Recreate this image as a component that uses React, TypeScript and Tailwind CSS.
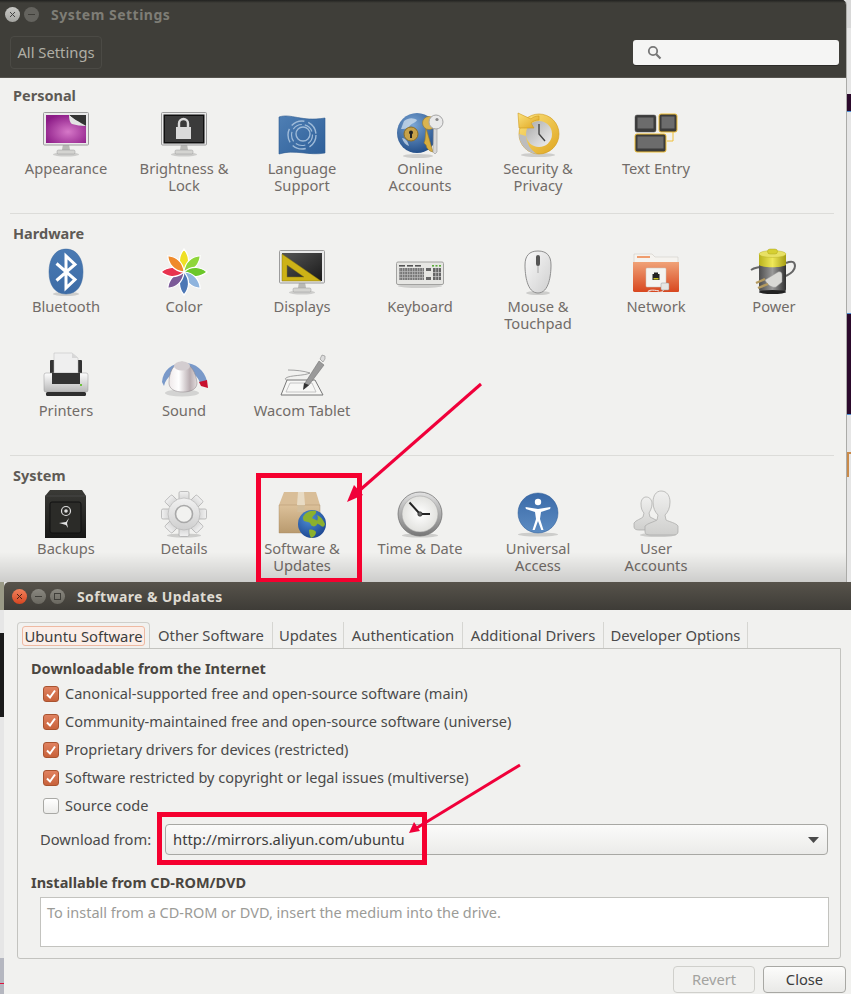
import type { ReactNode } from 'react';

function Icon({ children }: { children: ReactNode }) {
  return (
    <svg width="48" height="48" viewBox="0 0 48 48" className="shrink-0">
      {children}
    </svg>
  );
}

function Shadow({ cx = 24, cy = 45, rx = 16 }: { cx?: number; cy?: number; rx?: number }) {
  return <ellipse cx={cx} cy={cy} rx={rx} ry={2} fill="#000" opacity="0.15" />;
}

function Monitor({ children }: { children: ReactNode }) {
  return (
    <>
      <Shadow cy={44.5} rx={13} />
      <path d="M21 34h6l1 6h-8z" fill="#b9b9b6" />
      <rect x="15" y="40" width="18" height="4" rx="1.5" fill="#d4d4d1" stroke="#999" strokeWidth="0.5" />
      <rect x="1.5" y="2.5" width="45" height="32.5" rx="1" fill="#eaeaea" stroke="#9c9c9c" />
      {children}
    </>
  );
}

function Appearance() {
  return (
    <Icon>
      <defs>
        <radialGradient id="ap1" cx="0.55" cy="0.6" r="0.65">
          <stop offset="0" stopColor="#d678c8" />
          <stop offset="1" stopColor="#8c1b87" />
        </radialGradient>
      </defs>
      <Monitor>
        <rect x="4" y="5" width="40" height="28" fill="#333" />
        <path d="M4 5h23l2 7 8 3 7 1v17H4z" fill="url(#ap1)" />
        <path d="M27 5c1 5 8 10 17 11-4-1-8-2-11-6z" fill="#fff" />
        <path d="M27 5c0 4 1 8 3 9 4 1 9 2 14 2-6-4-13-7-17-11z" fill="#e3e3e3" />
      </Monitor>
    </Icon>
  );
}

function Brightness() {
  return (
    <Icon>
      <Monitor>
        <rect x="3.5" y="4.5" width="41" height="29" fill="#0f0f0f" />
        <rect x="5" y="6" width="38" height="26" fill="#3b3b3b" />
        <rect x="16" y="17" width="15" height="12" fill="#dadada" />
        <path d="M19 17v-3.5a4.5 4.5 0 0 1 9 0V17" fill="none" stroke="#dadada" strokeWidth="2.4" />
      </Monitor>
    </Icon>
  );
}

function Language() {
  return (
    <Icon>
      <defs>
        <linearGradient id="la1" x1="0" y1="0" x2="1" y2="1">
          <stop offset="0" stopColor="#4f7fb4" />
          <stop offset="1" stopColor="#2e5f99" />
        </linearGradient>
      </defs>
      <path d="M1 7c12-4 22 5 46 1v35c-16 3-30-4-46 1z" fill="url(#la1)" stroke="#2d5a90" strokeWidth="0.6" />
      <g fill="none" stroke="#a9c3de" opacity="0.9">
        <circle cx="24" cy="25" r="14" strokeWidth="1.4" strokeDasharray="14 4" />
        <circle cx="24" cy="25" r="10.5" strokeWidth="1.2" strokeDasharray="10 3" />
        <circle cx="25" cy="24" r="7" strokeWidth="1.4" />
      </g>
    </Icon>
  );
}

function Online() {
  return (
    <Icon>
      <defs>
        <radialGradient id="on1" cx="0.4" cy="0.3" r="0.8">
          <stop offset="0" stopColor="#7aa6d6" />
          <stop offset="1" stopColor="#19447f" />
        </radialGradient>
      </defs>
      <Shadow cx={22} cy={46} rx={15} />
      <circle cx="21" cy="23" r="20" fill="url(#on1)" />
      <path d="M8 11c5-4 10-3 13-1-1 3-6 3-8 7-2 2-6 2-8 2zM6 28c3 0 6 3 7 8-3-1-6-4-7-8z" fill="#d7e4ef" opacity="0.7" />
      <circle cx="15" cy="24" r="7" fill="#c7a24a" stroke="#8c6d24" />
      <circle cx="15" cy="22.5" r="2" fill="#222" />
      <rect x="14" y="23" width="2" height="5" fill="#222" />
      <path d="M30 18l7 24 -3-1-3-3-1-3-2-2 1-3z" fill="#d6ad3f" stroke="#9e7a22" strokeWidth="0.6" />
      <circle cx="33" cy="13" r="6.5" fill="#d9b451" stroke="#9e7a22" strokeWidth="0.6" />
      <path d="M37.5 18h3.5v24l-2 2-2-2z" fill="#d8d8d8" stroke="#999" strokeWidth="0.6" />
      <circle cx="40" cy="12" r="7" fill="#e9e9e9" stroke="#a5a5a5" />
      <circle cx="41" cy="9.5" r="1.6" fill="#888" />
    </Icon>
  );
}

function Security() {
  return (
    <Icon>
      <defs>
        <linearGradient id="se1" x1="0" y1="0" x2="1" y2="1">
          <stop offset="0" stopColor="#fbe27c" />
          <stop offset="1" stopColor="#dfa51f" />
        </linearGradient>
        <linearGradient id="se2" x1="0" y1="0" x2="1" y2="1">
          <stop offset="0" stopColor="#a9a9a9" />
          <stop offset="1" stopColor="#f2f2f2" />
        </linearGradient>
      </defs>
      <Shadow cy={45} rx={17} />
      <circle cx="25" cy="24" r="20" fill="url(#se1)" stroke="#d09a1c" strokeWidth="0.6" />
      <path d="M5 24a20 20 0 0 0 18 20c-6-4-10-9-11-18z" fill="#bdbdbd" />
      <circle cx="25" cy="24" r="13" fill="url(#se2)" />
      <path d="M25 14v10l6 7" fill="none" stroke="#444" strokeWidth="1.4" />
      <path d="M4 3l1 15h15l-3-5c2-2 5-3 8-3V6c-3 0-6 1-8 3z" fill="url(#se1)" stroke="#d09a1c" strokeWidth="0.6" />
    </Icon>
  );
}

function KeyCap({ x, y, w, h, lit }: { x: number; y: number; w: number; h: number; lit?: boolean }) {
  return (
    <>
      <rect x={x} y={y} width={w} height={h} rx="2" fill="#3b3b3b" stroke={lit ? '#f0bf36' : '#555'} strokeWidth={lit ? 1 : 0.5} />
      <rect x={x + 2.5} y={y + 2.5} width={w - 5} height={h - 6} fill="#6c6c6c" />
    </>
  );
}

function TextEntry() {
  return (
    <Icon>
      <path d="M41 22v9h-6" fill="none" stroke="#f0bf36" strokeWidth="1" />
      <KeyCap x={3} y={5} w={21} h={17} />
      <KeyCap x={27} y={4} w={18} h={18} lit />
      <KeyCap x={3} y={24} w={31} h={18} lit />
    </Icon>
  );
}

function Bluetooth() {
  return (
    <Icon>
      <defs>
        <linearGradient id="bt1" x1="0" y1="0" x2="0" y2="1">
          <stop offset="0" stopColor="#4a7ab3" />
          <stop offset="1" stopColor="#3d6ca6" />
        </linearGradient>
      </defs>
      <Shadow cy={46} rx={13} />
      <path d="M24 1c11 0 17 10 17 23s-6 22-17 22S7 37 7 24 13 1 24 1z" fill="url(#bt1)" stroke="#3a689f" strokeWidth="0.5" />
      <path d="M14.5 15.5L33 31.5 24 40V8l9 8.5-18.5 16" fill="none" stroke="#fff" strokeWidth="3" />
    </Icon>
  );
}

function Color() {
  const petals = ['#efe026', '#8fd63a', '#6bc72a', '#8fb4de', '#4c77b5', '#7c5a98', '#e8324e', '#ef8a2a'];
  return (
    <Icon>
      {petals.map((c, i) => (
        <path
          key={c}
          d="M24 24C17 16 19 7 24 1c5 6 7 15 0 23z"
          fill={c}
          stroke="#fff"
          strokeWidth="1.2"
          transform={`rotate(${i * 45} 24 24)`}
        />
      ))}
    </Icon>
  );
}

function Displays() {
  return (
    <Icon>
      <defs>
        <linearGradient id="di1" x1="0" y1="0" x2="1" y2="1">
          <stop offset="0" stopColor="#555" />
          <stop offset="1" stopColor="#1a1a1a" />
        </linearGradient>
      </defs>
      <Monitor>
        <rect x="4" y="5" width="40" height="28" fill="url(#di1)" />
        <path fillRule="evenodd" d="M4 6l39 27H4zM9 17v12h17z" fill="#cdb217" stroke="#8a7a10" strokeWidth="0.5" />
      </Monitor>
    </Icon>
  );
}

function Keyboard() {
  const keys = Array.from({ length: 10 }, (_, i) => i);
  return (
    <Icon>
      <Shadow cy={38} rx={22} />
      <rect x="0.5" y="14" width="47" height="22.5" rx="1.5" fill="#e6e6e3" stroke="#a2a2a0" />
      <rect x="3" y="17" width="6" height="1.6" fill="#555" />
      <rect x="11" y="17" width="6" height="1.6" fill="#555" />
      <rect x="19" y="17" width="6" height="1.6" fill="#555" />
      <rect x="36" y="17" width="2" height="1.6" fill="#5aaa3a" />
      <rect x="39.5" y="17" width="2" height="1.6" fill="#5aaa3a" />
      <rect x="43" y="17" width="2" height="1.6" fill="#5aaa3a" />
      <rect x="3" y="20" width="25" height="12" fill="#777" />
      {keys.map((k) => (
        <rect key={k} x={3.5 + k * 2.5} y="20" width="0.7" height="12" fill="#bbb" />
      ))}
      <rect x="3" y="23" width="25" height="0.7" fill="#bbb" />
      <rect x="3" y="26" width="25" height="0.7" fill="#bbb" />
      <rect x="3" y="29" width="25" height="0.7" fill="#bbb" />
      <rect x="30" y="20" width="5" height="3" fill="#666" />
      <rect x="30" y="29" width="5" height="3" fill="#666" />
      <rect x="37" y="20" width="8" height="12" fill="#666" />
      <rect x="39.5" y="20" width="0.7" height="12" fill="#ccc" />
      <rect x="42" y="20" width="0.7" height="12" fill="#ccc" />
      <rect x="37" y="24" width="8" height="0.7" fill="#ccc" />
      <rect x="37" y="28" width="8" height="0.7" fill="#ccc" />
    </Icon>
  );
}

function Mouse() {
  return (
    <Icon>
      <defs>
        <linearGradient id="mo1" x1="0" y1="0" x2="1" y2="1">
          <stop offset="0" stopColor="#fafafa" />
          <stop offset="1" stopColor="#cfcfcf" />
        </linearGradient>
      </defs>
      <Shadow cy={45} rx={12} />
      <path d="M24 3c9 0 13 5 13 14 0 10-2 28-13 28S11 27 11 17c0-9 4-14 13-14z" fill="url(#mo1)" stroke="#8f8f8f" />
      <rect x="22" y="7" width="4" height="11" rx="2" fill="#555" />
      <rect x="23.6" y="18" width="0.8" height="7" fill="#999" />
    </Icon>
  );
}

function Network() {
  return (
    <Icon>
      <defs>
        <linearGradient id="ne1" x1="0" y1="0" x2="0" y2="1">
          <stop offset="0" stopColor="#f0a277" />
          <stop offset="1" stopColor="#d8471f" />
        </linearGradient>
      </defs>
      <path d="M2 6h18l3 3h23v10H2z" fill="#f5f3ef" stroke="#c9c5bd" strokeWidth="0.5" />
      <rect x="5" y="8" width="13" height="2" fill="#ef9c6d" />
      <path d="M1 14h46v29a1 1 0 0 1-1 1H3a2 2 0 0 1-2-1z" fill="url(#ne1)" />
      <rect x="14" y="20" width="20" height="19" rx="1" fill="#f4f4f1" stroke="#c9c5bd" strokeWidth="0.5" />
      <rect x="20.5" y="26" width="7" height="6" fill="#222" />
      <rect x="22" y="24.5" width="4" height="2" fill="#222" />
      <rect x="21.5" y="30" width="5" height="1.5" fill="#c8c020" />
      <rect x="29" y="35" width="8" height="7" rx="1" fill="#e6e6e3" stroke="#999" strokeWidth="0.5" />
      <path d="M31 42c2 3-12 3-14 2-3-1 2-3 10-1" fill="none" stroke="#eee" strokeWidth="1" />
    </Icon>
  );
}

function Power() {
  return (
    <Icon>
      <defs>
        <linearGradient id="po1" x1="0" y1="0" x2="1" y2="0">
          <stop offset="0" stopColor="#4d4d4d" />
          <stop offset="0.5" stopColor="#9a9a9a" />
          <stop offset="1" stopColor="#2f2f2f" />
        </linearGradient>
        <linearGradient id="po2" x1="0" y1="0" x2="1" y2="0">
          <stop offset="0" stopColor="#b9b21c" />
          <stop offset="0.5" stopColor="#efe85a" />
          <stop offset="1" stopColor="#a59d12" />
        </linearGradient>
      </defs>
      <path d="M10 19c-4 1-6 1-9 3M36 15c5-2 9-2 9 3 0 5-5 8-9 10" fill="none" stroke="#666" strokeWidth="2" />
      <rect x="9" y="14" width="27" height="30" rx="3" fill="url(#po1)" />
      <ellipse cx="22.5" cy="44" rx="13.5" ry="2" fill="#222" />
      <path d="M9 6h27v11c-4 3-23 3-27 0z" fill="url(#po2)" />
      <ellipse cx="22.5" cy="6" rx="13.5" ry="3.5" fill="#e8e164" stroke="#b3ab1c" strokeWidth="0.4" />
      <rect x="17.5" y="1" width="10" height="5" rx="2.5" fill="#d6cf33" stroke="#a59d12" strokeWidth="0.4" />
      <path d="M15 32l13-8c3-1 4 1 4 3v7l-6 5c-3 1-8-1-11-7z" fill="#d9d9d6" stroke="#999" strokeWidth="0.5" />
      <path d="M6 35l9-4M8 40l10-4" stroke="#b49a5f" strokeWidth="2.4" />
    </Icon>
  );
}

function Printer() {
  return (
    <Icon>
      <defs>
        <linearGradient id="pr1" x1="0" y1="0" x2="0" y2="1">
          <stop offset="0" stopColor="#fdfdfd" />
          <stop offset="1" stopColor="#b8b8b8" />
        </linearGradient>
      </defs>
      <rect x="8" y="8" width="32" height="18" rx="1" fill="#333" />
      <path d="M12 1h18l6 5v19H12z" fill="#efefef" stroke="#bbb" strokeWidth="0.5" />
      <path d="M30 1v5h6z" fill="#d7d7d7" />
      <rect x="2" y="21" width="44" height="19" rx="2" fill="url(#pr1)" stroke="#999" strokeWidth="0.5" />
      <rect x="10" y="21" width="28" height="11" fill="#333" />
      <rect x="38" y="32" width="2" height="2" fill="#6fc23e" />
      <rect x="4" y="40" width="40" height="4" rx="1.5" fill="#2e2e2e" />
    </Icon>
  );
}

function Sound() {
  return (
    <Icon>
      <defs>
        <linearGradient id="so1" x1="0" y1="0" x2="1" y2="0">
          <stop offset="0" stopColor="#efe9ea" />
          <stop offset="0.35" stopColor="#ffffff" />
          <stop offset="0.75" stopColor="#b8acb0" />
          <stop offset="1" stopColor="#e2dcdd" />
        </linearGradient>
      </defs>
      <path d="M2 30C3 18 12 11 24 11s20 7 23 18l-7 2c-2-7-8-12-16-12S6 24 4 34z" fill="#6b8fc4" opacity="0.9" />
      <path d="M39 30l8-2 1 8-7-2z" fill="#c8102e" />
      <ellipse cx="22" cy="41" rx="17" ry="3.5" fill="#000" opacity="0.12" />
      <path d="M9 31c0-10 4-20 13-21 9 1 14 11 15 21 0 6-6 9-14 9S9 37 9 31z" fill="url(#so1)" stroke="#8a8286" strokeWidth="0.5" />
      <ellipse cx="22" cy="14" rx="8" ry="4.5" fill="#d3cdd0" />
    </Icon>
  );
}

function Wacom() {
  return (
    <Icon>
      <path d="M10 18c8 0 16 1 22 3-6 3-20 2-24 5-3 2 4 4 20 3" fill="none" stroke="#8d8d8d" strokeWidth="0.8" />
      <path d="M9 28h28l8 15H3z" fill="#f7f7f5" stroke="#777" />
      <path d="M12 31h22l4 9H8z" fill="none" stroke="#b9b9b9" strokeWidth="0.8" />
      <path d="M27 31l14-22 5 4-15 20-5 4z" fill="#9a9a9a" stroke="#666" strokeWidth="0.5" />
      <path d="M42 7l2-4 3 1v3l-2 3z" fill="#dcdcdc" stroke="#777" strokeWidth="0.5" />
      <path d="M26 31l5 2-6 5z" fill="#333" />
    </Icon>
  );
}

function Backups() {
  return (
    <Icon>
      <defs>
        <linearGradient id="ba1" x1="0" y1="0" x2="0" y2="1">
          <stop offset="0" stopColor="#3a3a36" />
          <stop offset="1" stopColor="#171716" />
        </linearGradient>
      </defs>
      <path d="M8 0h32l4 6v42H3V6z" fill="url(#ba1)" />
      <path d="M3 6h41" stroke="#555" strokeWidth="0.6" />
      <rect x="8" y="12" width="31" height="31" rx="2" fill="#2b2b28" stroke="#111" />
      <circle cx="24" cy="21" r="4.5" fill="none" stroke="#ddd" strokeWidth="1.2" />
      <circle cx="24" cy="21" r="1.8" fill="#ddd" />
      <path d="M24 35l-7-2 7-1 3-4-2 5 1 5z" fill="#e6e6e6" />
    </Icon>
  );
}

function Details() {
  const teeth = [0, 45, 90, 135, 180, 225, 270, 315];
  return (
    <Icon>
      <defs>
        <linearGradient id="de1" x1="0" y1="0" x2="0" y2="1">
          <stop offset="0" stopColor="#f1f1f1" />
          <stop offset="1" stopColor="#cfcfcf" />
        </linearGradient>
      </defs>
      <Shadow cy={45.5} rx={17} />
      {teeth.map((t) => (
        <rect key={t} x="19" y="1.5" width="10" height="10" rx="1.5" fill="url(#de1)" stroke="#a8a8a8" strokeWidth="0.7" transform={`rotate(${t} 24 24)`} />
      ))}
      <circle cx="24" cy="24" r="16" fill="url(#de1)" stroke="#b8b8b8" strokeWidth="0.7" />
      <circle cx="24" cy="24" r="8.5" fill="#f2f2f0" stroke="#a8a8a8" strokeWidth="1.6" />
    </Icon>
  );
}

function Globe({ cx, cy, r, id }: { cx: number; cy: number; r: number; id: string }) {
  return (
    <g>
      <defs>
        <radialGradient id={id} cx="0.4" cy="0.3" r="0.8">
          <stop offset="0" stopColor="#4f8fd6" />
          <stop offset="1" stopColor="#173f8a" />
        </radialGradient>
      </defs>
      <circle cx={cx} cy={cy} r={r} fill={`url(#${id})`} />
      <path
        d={`M${cx - 9} ${cy - 7}c3-6 9-7 13-6 1 3-3 4-4 7 2 2 5 1 6 4-1 4-4 6-7 3-1-4-5-3-7-4-1-1-1-3-1-4zM${cx + 5} ${cy - 9}c3 1 6 4 8 9-1 4-3 3-5 1-2-1-4-2-3-4 1-2 1-4 0-6zM${cx - 3} ${cy + 6}c2-1 6 0 7 2 0 3-2 5-5 6-1-2-2-5-2-8z`}
        fill="#8bb02e"
      />
    </g>
  );
}

function Package() {
  return (
    <Icon>
      <defs>
        <linearGradient id="pk1" x1="0" y1="0" x2="0" y2="1">
          <stop offset="0" stopColor="#dcc19a" />
          <stop offset="1" stopColor="#b99a6e" />
        </linearGradient>
      </defs>
      <path d="M6 2h32l4 13H1z" fill="#d9be98" />
      <path d="M1 15h41v28H1z" fill="url(#pk1)" stroke="#a68a60" strokeWidth="0.4" />
      <path d="M20 2h6l1 13h-8z" fill="#e8dbc4" />
      <rect x="19.5" y="15" width="7" height="7" fill="#d2bd9b" />
      <Globe cx={34} cy={34} r={14} id="pk2" />
    </Icon>
  );
}

function Clock() {
  return (
    <Icon>
      <defs>
        <linearGradient id="cl1" x1="0" y1="0" x2="0" y2="1">
          <stop offset="0" stopColor="#e2e2e2" />
          <stop offset="1" stopColor="#777" />
        </linearGradient>
        <radialGradient id="cl2" cx="0.5" cy="0.5" r="0.6">
          <stop offset="0" stopColor="#fff" />
          <stop offset="1" stopColor="#dcdcd8" />
        </radialGradient>
      </defs>
      <Shadow cy={45.5} rx={18} />
      <circle cx="24" cy="24" r="22" fill="url(#cl1)" stroke="#6c6c6c" strokeWidth="0.7" />
      <circle cx="24" cy="24" r="18" fill="url(#cl2)" stroke="#999" strokeWidth="0.5" />
      <path d="M24 24L13.5 12.5M24 24h10" fill="none" stroke="#222" strokeWidth="2" />
      <circle cx="24" cy="24" r="2.2" fill="#666" stroke="#222" strokeWidth="0.7" />
    </Icon>
  );
}

function Universal() {
  return (
    <Icon>
      <defs>
        <linearGradient id="un1" x1="0" y1="0" x2="0" y2="1">
          <stop offset="0" stopColor="#3a6aa8" />
          <stop offset="1" stopColor="#5d8cc2" />
        </linearGradient>
      </defs>
      <Shadow cy={44.5} rx={20} />
      <circle cx="24" cy="23" r="20" fill="url(#un1)" stroke="#2f5d96" strokeWidth="0.5" />
      <circle cx="24" cy="12" r="3.2" fill="#fff" />
      <path d="M11.5 17l12.5 2 12.5-2-.4 2-9.1 3-1 7 3.5 11h-2.2L24 31l-3.3 9h-2.2l3.5-11-1-7-9.1-3z" fill="#fff" />
    </Icon>
  );
}

function Users() {
  return (
    <Icon>
      <defs>
        <linearGradient id="us1" x1="0" y1="0" x2="0" y2="1">
          <stop offset="0" stopColor="#f0f0ef" />
          <stop offset="1" stopColor="#cfcfcd" />
        </linearGradient>
      </defs>
      <Shadow cx={26} cy={45} rx={18} />
      <path d="M14 7c4 0 6 3 6 7 0 4-2 7-3 9l1 4 8 4v9H7c-3 0-5-1-5-3v-4c2-3 7-4 9-6l1-4c-2-2-3-5-3-9 0-4 2-7 5-7z" fill="url(#us1)" stroke="#a8a8a6" strokeWidth="0.7" />
      <path d="M29 1c6 0 9 5 9 11 0 6-2 10-5 13l1 5c4 2 10 3 12 6v6c0 2-2 3-5 3H18c-3 0-5-1-5-3v-6c3-3 9-4 12-6l1-5c-3-3-5-7-5-13 0-6 3-11 8-11z" fill="url(#us1)" stroke="#a8a8a6" strokeWidth="0.7" />
    </Icon>
  );
}

type Item = { icon: ReactNode; label: string[] };

const personal: Item[] = [
  { icon: <Appearance />, label: ['Appearance'] },
  { icon: <Brightness />, label: ['Brightness &', 'Lock'] },
  { icon: <Language />, label: ['Language', 'Support'] },
  { icon: <Online />, label: ['Online', 'Accounts'] },
  { icon: <Security />, label: ['Security &', 'Privacy'] },
  { icon: <TextEntry />, label: ['Text Entry'] },
];

const hardware: Item[] = [
  { icon: <Bluetooth />, label: ['Bluetooth'] },
  { icon: <Color />, label: ['Color'] },
  { icon: <Displays />, label: ['Displays'] },
  { icon: <Keyboard />, label: ['Keyboard'] },
  { icon: <Mouse />, label: ['Mouse &', 'Touchpad'] },
  { icon: <Network />, label: ['Network'] },
  { icon: <Power />, label: ['Power'] },
  { icon: <Printer />, label: ['Printers'] },
  { icon: <Sound />, label: ['Sound'] },
  { icon: <Wacom />, label: ['Wacom Tablet'] },
];

const system: Item[] = [
  { icon: <Backups />, label: ['Backups'] },
  { icon: <Details />, label: ['Details'] },
  { icon: <Package />, label: ['Software &', 'Updates'] },
  { icon: <Clock />, label: ['Time & Date'] },
  { icon: <Universal />, label: ['Universal', 'Access'] },
  { icon: <Users />, label: ['User', 'Accounts'] },
];

function Section({ title, items, className }: { title: string; items: Item[]; className: string }) {
  return (
    <section className={className}>
      <h2 className="pl-[13px] text-[14.5px] leading-[17px] font-bold text-[#5e5a55]">{title}</h2>
      <div className="mt-[6px] grid grid-cols-[repeat(7,118px)] gap-y-[19px] pl-[7px]">
        {items.map((item) => (
          <div key={item.label[0]} className="flex h-[85px] flex-col items-center">
            {item.icon}
            <div className="mt-[2px] text-center text-[14.7px] leading-[17px] whitespace-nowrap text-[#716c68]">
              {item.label.map((line) => (
                <div key={line}>{line}</div>
              ))}
            </div>
          </div>
        ))}
      </div>
    </section>
  );
}

function SettingsWindow() {
  return (
    <div className="absolute top-0 left-0 h-[582px] w-[847px] overflow-hidden rounded-tr-[5px] border-r border-[#ababa8] bg-[#f1f1ef]">
      <header className="h-[78px] border-b border-[#55534e] bg-[#3f3e39]">
        <div className="h-[3px] bg-gradient-to-b from-[#222220] to-[#3f3e39]" />
        <div className="flex h-[22px] items-center pl-[5px]">
          <div className="flex h-[15px] w-[15px] items-center justify-center rounded-full bg-gradient-to-b from-[#c8c8c5] to-[#a5a5a1]">
            <svg width="7" height="7" viewBox="0 0 7 7">
              <path d="M1 1l5 5M6 1l-5 5" stroke="#444" strokeWidth="1" />
            </svg>
          </div>
          <div className="ml-[4px] flex h-[15px] w-[15px] items-center justify-center rounded-full bg-[#64635e]">
            <div className="h-px w-[7px] bg-[#3f3e39]" />
          </div>
          <span className="ml-[12px] text-[14px] font-bold tracking-[0.5px] text-[#7e7d76]">System Settings</span>
        </div>
        <div className="mt-[11px] flex items-center justify-between pr-[7px] pl-[10px]">
          <div className="flex h-[33px] w-[92px] items-center justify-center rounded-[4px] border border-[#4b4a45] text-[14.8px] text-[#b0aea5]">
            All Settings
          </div>
          <div className="flex h-[25px] w-[206px] items-center rounded-[3px] bg-[#f5f5f4] pl-[14px] shadow-[0_1px_0_#2c2b28]">
            <svg width="15" height="15" viewBox="0 0 15 15">
              <circle cx="6" cy="6" r="4.2" fill="none" stroke="#777" strokeWidth="1.8" />
              <path d="M9.2 9.2l4.3 4.3" stroke="#777" strokeWidth="2.2" />
            </svg>
          </div>
        </div>
      </header>
      <Section title="Personal" items={personal} className="h-[135px] pt-[9px]" />
      <div className="mr-[12px] ml-[10px] h-px bg-[#dcdcd9]" />
      <Section title="Hardware" items={hardware} className="h-[241px] pt-[11px]" />
      <div className="mr-[12px] ml-[10px] h-px bg-[#dcdcd9]" />
      <Section title="System" items={system} className="pt-[11px]" />
      <div className="absolute right-0 bottom-0 left-0 h-[30px] bg-gradient-to-b from-transparent to-black/15" />
    </div>
  );
}

const tabs = [
  { label: 'Other Software', width: 'w-[123px]' },
  { label: 'Updates', width: 'w-[71px]' },
  { label: 'Authentication', width: 'w-[119px]' },
  { label: 'Additional Drivers', width: 'w-[141px]' },
  { label: 'Developer Options', width: 'w-[144px]' },
];

const sources = [
  { label: 'Canonical-supported free and open-source software (main)', checked: true },
  { label: 'Community-maintained free and open-source software (universe)', checked: true },
  { label: 'Proprietary drivers for devices (restricted)', checked: true },
  { label: 'Software restricted by copyright or legal issues (multiverse)', checked: true },
  { label: 'Source code', checked: false },
];

function CheckBox({ checked }: { checked: boolean }) {
  if (!checked) {
    return <div className="h-[16px] w-[16px] rounded-[3px] border border-[#a9a9a5] bg-gradient-to-b from-white to-[#ececea]" />;
  }
  return (
    <div className="flex h-[16px] w-[16px] items-center justify-center rounded-[3px] border border-[#a9532f] bg-gradient-to-b from-[#e08260] to-[#c8623a]">
      <svg width="12" height="12" viewBox="0 0 12 12">
        <path d="M2 6.5l3 3 5-7" fill="none" stroke="#fff" strokeWidth="2" />
      </svg>
    </div>
  );
}

function UpdatesWindow() {
  return (
    <div className="absolute top-[582px] left-[4px] h-[412px] w-[847px] overflow-hidden rounded-tl-[5px] bg-[#f1f1ef] text-[#3c3c3c]">
      <div className="flex h-[28px] items-center bg-gradient-to-b from-[#57534b] to-[#3e3c37] pl-[8px]">
        <div className="flex h-[15px] w-[15px] items-center justify-center rounded-full bg-gradient-to-b from-[#f0805a] to-[#d6451f]">
          <svg width="7" height="7" viewBox="0 0 7 7">
            <path d="M1 1l5 5M6 1l-5 5" stroke="#4a2418" strokeWidth="1" />
          </svg>
        </div>
        <div className="ml-[4px] flex h-[15px] w-[15px] items-center justify-center rounded-full bg-gradient-to-b from-[#8a8880] to-[#6a6860]">
          <div className="h-px w-[7px] bg-[#3f3e39]" />
        </div>
        <div className="ml-[4px] flex h-[15px] w-[15px] items-center justify-center rounded-full bg-gradient-to-b from-[#8a8880] to-[#6a6860]">
          <div className="h-[7px] w-[7px] border border-[#3f3e39]" />
        </div>
        <span className="ml-[12px] text-[14px] font-bold tracking-[0.4px] text-[#dfdbd2]">Software &amp; Updates</span>
      </div>

      <div className="mt-[12px] ml-[13px] flex h-[26px] items-stretch text-[14.8px]">
        <div className="flex w-[133px] items-center justify-center rounded-t-[4px] border border-b-0 border-[#cfcfcb] bg-[#f1f1ef]">
          <span className="rounded-[3px] border border-[#eeb9a2] bg-[#fbeee8] px-[1px] leading-[18px] text-[#3c3c3c]">Ubuntu Software</span>
        </div>
        {tabs.map((tab) => (
          <div key={tab.label} className={`flex items-center justify-center border-r border-[#d6d6d2] text-[#4a4a4a] ${tab.width}`}>
            {tab.label}
          </div>
        ))}
      </div>

      <div className="ml-[13px] h-[311px] w-[824px] rounded-b-[3px] border border-[#c3c3bf] text-[14.5px]">
        <h3 className="mt-[11px] pl-[13px] leading-[17px] font-bold text-[#4a4640]">Downloadable from the Internet</h3>
        <div className="mt-[3px] pl-[25px]">
          {sources.map((source) => (
            <div key={source.label} className="flex h-[28px] items-center gap-[6px]">
              <CheckBox checked={source.checked} />
              <span className="text-[14.55px] text-[#4a4a4a]">{source.label}</span>
            </div>
          ))}
        </div>
        <div className="mt-[4px] flex items-center pl-[22px]">
          <span className="w-[125px] text-[14.7px] text-[#4a4a4a]">Download from:</span>
          <div className="flex h-[31px] w-[663px] items-center justify-between rounded-[4px] border border-[#a8a8a4] bg-gradient-to-b from-[#fbfbfa] to-[#ebebe9] pr-[8px] pl-[7px] text-[#3c3c3c]">
            <span className="text-[14.8px]">http://mirrors.aliyun.com/ubuntu</span>
            <svg width="11" height="6" viewBox="0 0 11 6">
              <path d="M0 0h11L5.5 6z" fill="#4a4a4a" />
            </svg>
          </div>
        </div>
        <h3 className="mt-[19px] pl-[13px] leading-[17px] font-bold text-[#4a4640]">Installable from CD-ROM/DVD</h3>
        <div className="mt-[6px] ml-[22px] h-[50px] w-[789px] border border-[#c3c3bf] bg-white pt-[6px] pl-[6px] leading-[17px] text-[#9b9b97]">
          To install from a CD-ROM or DVD, insert the medium into the drive.
        </div>
      </div>

      <div className="mt-[7px] flex justify-end gap-[8px] pr-[5px] text-[14.7px]">
        <div className="flex h-[27px] w-[82px] items-center justify-center rounded-[4px] border border-[#d0d0cc] text-[#a3a39f]">Revert</div>
        <div className="flex h-[27px] w-[83px] items-center justify-center rounded-[4px] border border-[#a8a8a4] bg-gradient-to-b from-[#fcfcfb] to-[#e9e9e7] text-[#3c3c3c]">Close</div>
      </div>
    </div>
  );
}

export default function App() {
  return (
    <div
      className="relative h-[994px] w-[851px] overflow-hidden bg-[#e6e6e6]"
      style={{ fontFamily: '"Noto Sans", "Open Sans", sans-serif' }}
    >
      {/* desktop windows behind, only slivers show */}
      <div className="absolute top-0 left-[846px] h-[28px] w-[5px] bg-[#d8d8d8]" />
      <div className="absolute top-[94px] left-[846px] h-[18px] w-[5px] border-b border-[#4a90d9] bg-[#2c0a2c]" />
      <div className="absolute top-[313px] left-[846px] h-[102px] w-[5px] border-y border-[#4a90d9] bg-[#2c0a2c]" />
      <div className="absolute top-[452px] left-[847px] h-[25px] w-[4px] border-t-2 border-l-2 border-[#c98a4a]" />
      <div className="absolute top-[582px] left-0 h-[28px] w-[4px] bg-[#9a9a86]" />
      <div className="absolute top-[633px] left-0 h-[84px] w-[4px] bg-[#1a1a1a]" />
      <div className="absolute top-[958px] left-0 h-[36px] w-[4px] bg-[#b5b7c0]" />
      <div className="absolute top-[983px] left-0 h-px w-[4px] bg-[#e0103a]" />

      <SettingsWindow />
      <div className="absolute top-[473px] left-[256px] h-[110px] w-[106px] border-[5px] border-[#f5002f]" />
      <UpdatesWindow />
      <div className="absolute top-[812px] left-[157px] h-[53px] w-[270px] border-[5px] border-[#f5002f]" />

      <svg className="pointer-events-none absolute inset-0" width="851" height="994" viewBox="0 0 851 994">
        <path d="M481 384L352 497" stroke="#f0003a" strokeWidth="3" />
        <path d="M347 502l7-17 9 10z" fill="#f0003a" />
        <path d="M520 765L415 829" stroke="#f0003a" strokeWidth="3" />
        <path d="M409 833l5-11 6 9z" fill="#f0003a" />
      </svg>
    </div>
  );
}
